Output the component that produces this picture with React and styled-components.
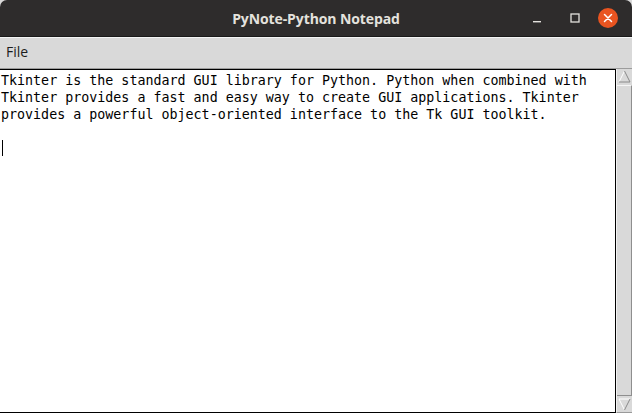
import React from 'react';
import styled, { createGlobalStyle } from 'styled-components';

const GlobalStyle = createGlobalStyle`
  html, body {
    margin: 0;
    padding: 0;
    background: #ffffff;
  }
  #root {
    width: 632px;
    height: 413px;
  }
`;

const Window = styled.div`
  width: 632px;
  height: 413px;
  display: flex;
  flex-direction: column;
  overflow: hidden;
  background: #d9d9d9;
`;

const TitleBar = styled.div`
  height: 36px;
  flex: none;
  background: #2e2c2c;
  border-radius: 7px 7px 0 0;
  display: flex;
  align-items: center;
  justify-content: center;
  position: relative;
  border-bottom: 1px solid #1a1a1a;
`;

const Title = styled.div`
  color: #e4e2de;
  font-family: "Open Sans", "Noto Sans", sans-serif;
  font-weight: 700;
  font-size: 14px;
  letter-spacing: -0.1px;
`;

const Controls = styled.div`
  position: absolute;
  right: 10px;
  top: 0;
  height: 36px;
  display: flex;
  align-items: center;
`;

const ControlSlot = styled.div`
  width: ${(p) => p.$w}px;
  height: 36px;
  display: flex;
  align-items: center;
  justify-content: center;
`;

const CloseDot = styled.div`
  width: 20px;
  height: 20px;
  border-radius: 50%;
  background: #e95420;
  display: flex;
  align-items: center;
  justify-content: center;
`;

const MenuBar = styled.div`
  height: 32px;
  flex: none;
  box-sizing: border-box;
  background: #d9d9d9;
  border-top: 1px solid #f4f4f4;
  border-bottom: 1px solid #9c9c9c;
  display: flex;
  align-items: center;
  padding: 0 0 3px 6px;
`;

const MenuItem = styled.span`
  font-family: "Open Sans", "Noto Sans", sans-serif;
  font-size: 14px;
  color: #1c1c1c;
`;

const Body = styled.div`
  flex: 1;
  display: flex;
  min-height: 0;
`;

const Editor = styled.div`
  flex: 1;
  background: #ffffff;
  border-top: 1px solid #000;
  border-right: 1px solid #000;
  border-bottom: 1px solid #000;
  padding: 2px 0 0 1px;
  font-family: "DejaVu Sans Mono", monospace;
  font-size: 13.33px;
  line-height: 17px;
  color: #000;
  white-space: pre;
`;

const Caret = styled.div`
  width: 1px;
  height: 16px;
  background: #000;
  margin-top: 17px;
  margin-left: 1px;
`;

const Scrollbar = styled.div`
  width: 15px;
  flex: none;
  background: #d9d9d9;
  display: flex;
  flex-direction: column;
  border-left: 1px solid #f2f2f2;
  border-bottom: 1px solid #9a9a9a;
`;

const Arrow = styled.div`
  height: 15px;
  flex: none;
  display: flex;
  align-items: center;
  justify-content: center;
`;

const Thumb = styled.div`
  flex: 1;
  margin: 1px 0;
  background: #d9d9d9;
  border-top: 1px solid #f5f5f5;
  border-bottom: 1px solid #8e8e8e;
  border-right: 1px solid #8e8e8e;
`;

const UpArrow = () => (
  <svg width="13" height="13" viewBox="0 0 13 13">
    <polygon points="6.5,1 12,12 1,12" fill="#d9d9d9" />
    <polyline points="1,12 6.5,1" stroke="#ffffff" strokeWidth="1" fill="none" />
    <polyline points="6.5,1 12,12 1,12" stroke="#8a8a8a" strokeWidth="1" fill="none" />
  </svg>
);

const DownArrow = () => (
  <svg width="13" height="13" viewBox="0 0 13 13">
    <polygon points="1,1 12,1 6.5,12" fill="#d9d9d9" />
    <polyline points="6.5,12 1,1 12,1" stroke="#ffffff" strokeWidth="1" fill="none" />
    <polyline points="12,1 6.5,12" stroke="#8a8a8a" strokeWidth="1" fill="none" />
  </svg>
);

const TEXT = `Tkinter is the standard GUI library for Python. Python when combined with
Tkinter provides a fast and easy way to create GUI applications. Tkinter
provides a powerful object-oriented interface to the Tk GUI toolkit.`;

export default function App() {
  return (
    <Window>
      <GlobalStyle />
      <TitleBar>
        <Title>PyNote-Python Notepad</Title>
        <Controls>
          <ControlSlot $w={38}>
            <svg width="10" height="10" viewBox="0 0 10 10">
              <rect x="1" y="8" width="8" height="1.4" fill="#e4e2de" />
            </svg>
          </ControlSlot>
          <ControlSlot $w={38}>
            <svg width="10" height="10" viewBox="0 0 10 10">
              <rect x="1" y="1" width="8" height="8" fill="none" stroke="#e4e2de" strokeWidth="1.3" />
            </svg>
          </ControlSlot>
          <ControlSlot $w={28}>
            <CloseDot>
              <svg width="10" height="10" viewBox="0 0 10 10">
                <path d="M1.5 1.5 L8.5 8.5 M8.5 1.5 L1.5 8.5" stroke="#ffffff" strokeWidth="1.5" strokeLinecap="round" />
              </svg>
            </CloseDot>
          </ControlSlot>
        </Controls>
      </TitleBar>
      <MenuBar>
        <MenuItem>File</MenuItem>
      </MenuBar>
      <Body>
        <Editor>
          {TEXT}
          <Caret />
        </Editor>
        <Scrollbar>
          <Arrow><UpArrow /></Arrow>
          <Thumb />
          <Arrow><DownArrow /></Arrow>
        </Scrollbar>
      </Body>
    </Window>
  );
}
